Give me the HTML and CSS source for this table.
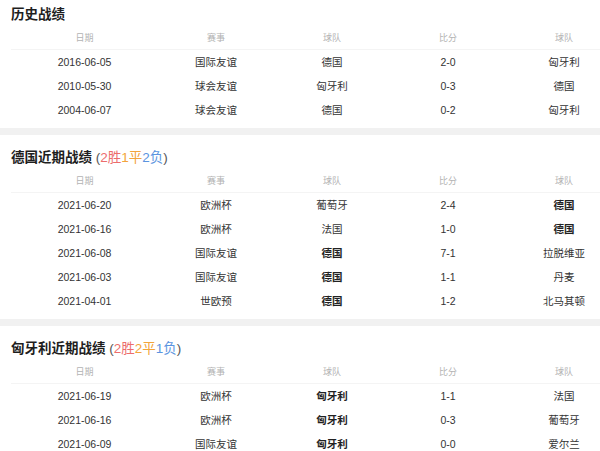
FILE: index.html
```html
<!DOCTYPE html>
<html lang="zh-CN">
<head>
  <meta charset="UTF-8">
  <meta name="viewport" content="width=device-width, initial-scale=1.0">
  <title>战绩</title>
  <link rel="stylesheet" href="styles.css">
</head>
<body>
  <div class="page">

    <div class="block">
      <h2 class="title">历史战绩</h2>
      <div class="row head">
        <span>日期</span><span>赛事</span><span>球队</span><span>比分</span><span>球队</span>
      </div>
      <div class="row"><span>2016-06-05</span><span>国际友谊</span><span>德国</span><span>2-0</span><span>匈牙利</span></div>
      <div class="row"><span>2010-05-30</span><span>球会友谊</span><span>匈牙利</span><span>0-3</span><span>德国</span></div>
      <div class="row"><span>2004-06-07</span><span>球会友谊</span><span>德国</span><span>0-2</span><span>匈牙利</span></div>
    </div>

    <div class="block">
      <h2 class="title">德国近期战绩 <span class="sum">(<em class="win">2胜</em><em class="draw">1平</em><em class="lose">2负</em>)</span></h2>
      <div class="row head">
        <span>日期</span><span>赛事</span><span>球队</span><span>比分</span><span>球队</span>
      </div>
      <div class="row"><span>2021-06-20</span><span>欧洲杯</span><span>葡萄牙</span><span>2-4</span><span class="me">德国</span></div>
      <div class="row"><span>2021-06-16</span><span>欧洲杯</span><span>法国</span><span>1-0</span><span class="me">德国</span></div>
      <div class="row"><span>2021-06-08</span><span>国际友谊</span><span class="me">德国</span><span>7-1</span><span>拉脱维亚</span></div>
      <div class="row"><span>2021-06-03</span><span>国际友谊</span><span class="me">德国</span><span>1-1</span><span>丹麦</span></div>
      <div class="row"><span>2021-04-01</span><span>世欧预</span><span class="me">德国</span><span>1-2</span><span>北马其顿</span></div>
    </div>

    <div class="block">
      <h2 class="title">匈牙利近期战绩 <span class="sum">(<em class="win">2胜</em><em class="draw">2平</em><em class="lose">1负</em>)</span></h2>
      <div class="row head">
        <span>日期</span><span>赛事</span><span>球队</span><span>比分</span><span>球队</span>
      </div>
      <div class="row"><span>2021-06-19</span><span>欧洲杯</span><span class="me">匈牙利</span><span>1-1</span><span>法国</span></div>
      <div class="row"><span>2021-06-16</span><span>欧洲杯</span><span class="me">匈牙利</span><span>0-3</span><span>葡萄牙</span></div>
      <div class="row"><span>2021-06-09</span><span>国际友谊</span><span class="me">匈牙利</span><span>0-0</span><span>爱尔兰</span></div>
    </div>

  </div>
</body>
</html>
```

FILE: styles.css
```css
  body {
    margin: 0;
    background-color: #fff;
    font-family: "Liberation Sans", "Noto Sans CJK SC", sans-serif;
    color: #333;
    overflow: hidden;
  }

  .page {
    margin-top: -8px;
    overflow: hidden;
  }

  .block {
    padding: 11px 0 6px 11px;
    border-bottom: 7px solid #f1f1f1;
    background-color: #fff;
  }

  .title {
    margin: 0;
    height: 23px;
    line-height: 23px;
    font-size: 13.5px;
    font-weight: bold;
    color: #1e1e1e;
    white-space: nowrap;
  }

  .sum {
    font-weight: normal;
    color: #555;
  }

  .sum em {
    font-style: normal;
  }

  .win {
    color: #ec6d6d;
  }

  .draw {
    color: #f3a43b;
  }

  .lose {
    color: #5b94e0;
  }

  .row {
    display: grid;
    grid-template-columns: 147px repeat(4, 116px);
    height: 24px;
    line-height: 24px;
    font-size: 10.5px;
    white-space: nowrap;
  }

  .row span {
    text-align: center;
  }

  .head {
    font-size: 9px;
    color: #b3b3b3;
    border-bottom: 1px solid #f4f4f4;
    box-sizing: border-box;
  }

  .me {
    font-weight: bold;
    color: #222;
  }
```
